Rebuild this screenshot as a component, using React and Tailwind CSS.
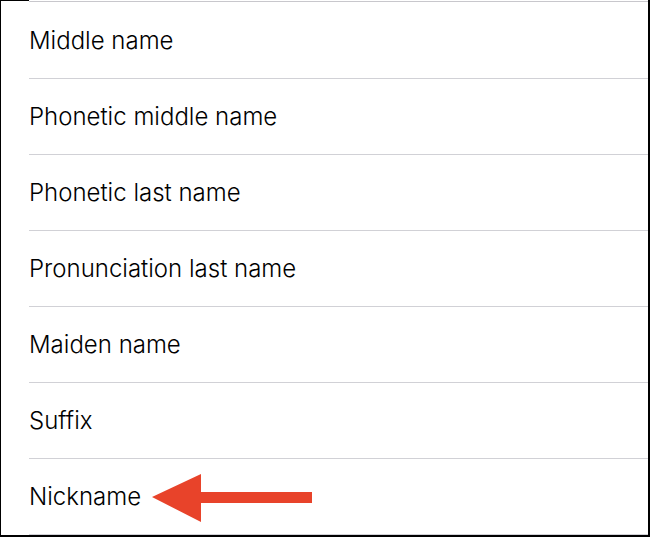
import React from "react";

const rows = [
  "Middle name",
  "Phonetic middle name",
  "Phonetic last name",
  "Pronunciation last name",
  "Maiden name",
  "Suffix",
  "Nickname",
];

const App = () => {
  return (
    <div className="relative w-[650px] h-[537px] bg-white border-l border-r-2 border-b-2 border-black overflow-hidden">
      <div className="flex h-[3px]">
        <div className="w-[28px] h-px bg-black" />
        <div className="flex-1 mt-px h-px bg-[#c8c7cc]" />
      </div>
      {rows.map((label) => (
        <div key={label} className="h-[76px] flex flex-col">
          <div className="flex-1 flex items-center pl-[28px] text-[24px] font-light text-black font-['Inter',sans-serif]">
            {label}
          </div>
          <div className="ml-[28px] h-px bg-[#d1d1d6]" />
        </div>
      ))}
      <svg
        className="absolute left-[150px] top-[473px]"
        width="163"
        height="50"
        viewBox="0 0 163 50"
      >
        <polygon points="1,24 50,1 50,19 161,19 161,30 50,30 50,49" fill="#e8432a" />
      </svg>
    </div>
  );
};

export default App;
